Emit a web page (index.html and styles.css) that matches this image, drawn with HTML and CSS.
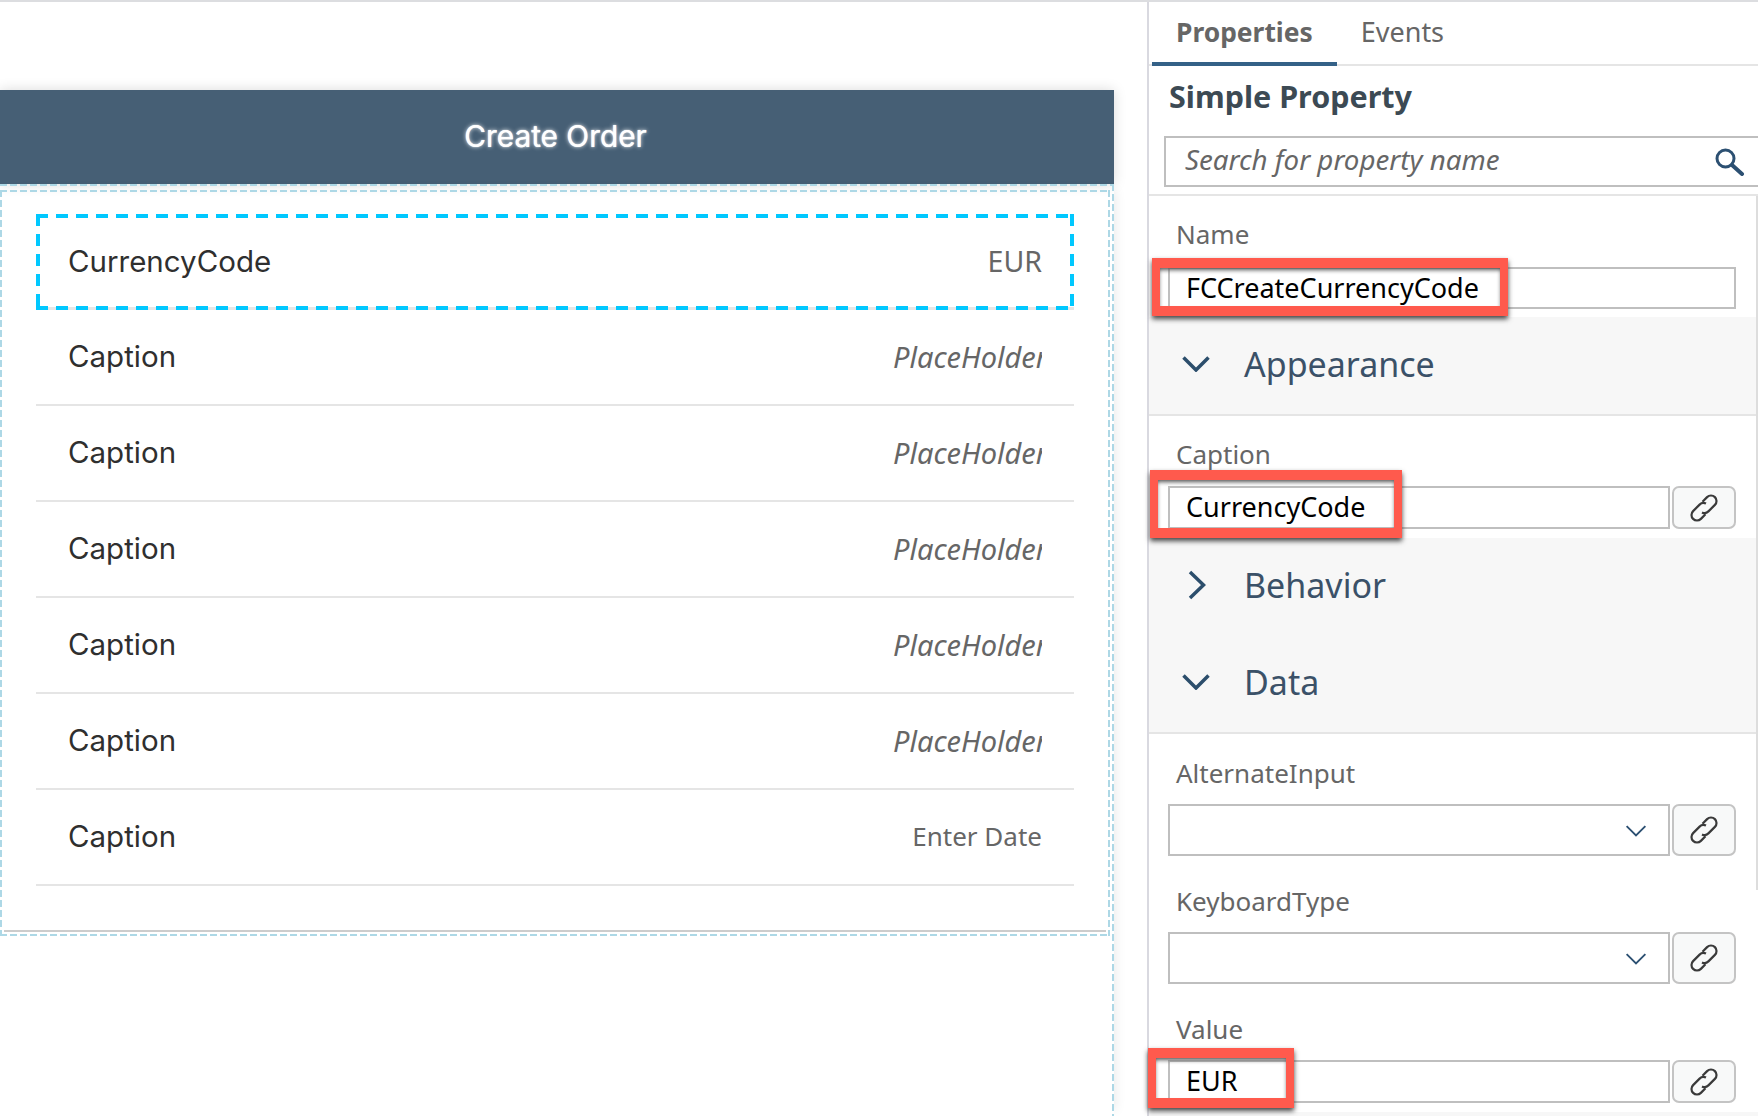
FILE: index.html
```html
<!DOCTYPE html>
<html lang="en">
  <head>
    <meta charset="UTF-8" />
    <title>Create Order</title>
    <link rel="stylesheet" href="styles.css">
  </head>
  <body>
    <svg class="defs" width="0" height="0">
      <symbol id="link" viewBox="0 0 28 28">
        <path d="M12.5 7.7 L17.1 3.1 A5.5 5.5 0 0 1 24.9 10.9 L18.4 17.4 A5.5 5.5 0 0 1 12 18.4" />
        <path d="M15.5 20.3 L10.9 24.9 A5.5 5.5 0 0 1 3.1 17.1 L9.6 10.6 A5.5 5.5 0 0 1 16 9.6" />
      </symbol>
      <symbol id="down" viewBox="0 0 28 16">
        <path d="M1.5 1.5 L14 14 L26.5 1.5" />
      </symbol>
    </svg>
    <div id="container">
      <div class="canvas">
        <div class="order-title">Create Order</div>
        <div class="outer-drop">
          <div class="inner-drop">
            <div class="form">
              <div class="row selected"><span class="cap">CurrencyCode</span><span class="val">EUR</span></div>
              <div class="row"><span class="cap">Caption</span><span class="val hint">PlaceHolder</span></div>
              <div class="row"><span class="cap">Caption</span><span class="val hint">PlaceHolder</span></div>
              <div class="row"><span class="cap">Caption</span><span class="val hint">PlaceHolder</span></div>
              <div class="row"><span class="cap">Caption</span><span class="val hint">PlaceHolder</span></div>
              <div class="row"><span class="cap">Caption</span><span class="val hint">PlaceHolder</span></div>
              <div class="row"><span class="cap">Caption</span><span class="val date">Enter Date</span></div>
            </div>
          </div>
        </div>
      </div>

      <div class="panel">
        <div class="tabs">
          <div class="tab active">Properties</div>
          <div class="tab">Events</div>
        </div>
        <div class="panel-title">Simple Property</div>
        <div class="search">
          <span>Search for property name</span>
          <svg class="search-icon" viewBox="0 0 30 28">
            <circle cx="10.5" cy="10.5" r="8.5" />
            <path class="handle" d="M17 17 L27 26" />
          </svg>
        </div>
        <div class="props">
          <div class="scroll-thumb"></div>
          <div class="group name-group">
            <div class="label">Name</div>
            <div class="field-row short">
              <div class="input">FCCreateCurrencyCode</div>
              <span class="mark mark-name"></span>
            </div>
          </div>
          <div class="section line">
            <svg class="chev"><use href="#down" /></svg>
            <span>Appearance</span>
          </div>
          <div class="group caption-group">
            <div class="label">Caption</div>
            <div class="field-row">
              <div class="input">CurrencyCode</div>
              <button class="link-btn"><svg><use href="#link" /></svg></button>
              <span class="mark mark-caption"></span>
            </div>
          </div>
          <div class="section">
            <svg class="chev right" viewBox="0 0 18 30"><path d="M2 2 L15.5 15 L2 28" /></svg>
            <span>Behavior</span>
          </div>
          <div class="section line">
            <svg class="chev"><use href="#down" /></svg>
            <span>Data</span>
          </div>
          <div class="group data-group">
            <div class="label">AlternateInput</div>
            <div class="field-row tall">
              <div class="input select"><svg class="arrow"><use href="#down" /></svg></div>
              <button class="link-btn"><svg><use href="#link" /></svg></button>
            </div>
            <div class="label next">KeyboardType</div>
            <div class="field-row tall">
              <div class="input select"><svg class="arrow"><use href="#down" /></svg></div>
              <button class="link-btn"><svg><use href="#link" /></svg></button>
            </div>
            <div class="label next">Value</div>
            <div class="field-row">
              <div class="input">EUR</div>
              <button class="link-btn"><svg><use href="#link" /></svg></button>
              <span class="mark mark-value"></span>
            </div>
          </div>
          <div class="section tail"></div>
        </div>
      </div>
    </div>
  </body>
</html>
```

FILE: styles.css
```css
html,
body {
  margin: 0;
  height: 1116px;
  overflow: hidden;
  background-color: white;
}
.defs {
  position: absolute;
}
#container {
  height: 1114px;
  display: flex;
  overflow: hidden;
  border-top: 2px solid #dcdde0;
  font-family: "Noto Sans", sans-serif;
}

/* left side */
.canvas {
  width: 1147px;
  flex: none;
  padding-top: 88px;
  box-sizing: border-box;
}
.order-title {
  width: 1114px;
  height: 94px;
  padding: 0 3px 2px 0;
  box-sizing: border-box;
  display: flex;
  align-items: center;
  justify-content: center;
  background-color: #465f75;
  box-shadow: 0 0 12px rgba(0, 0, 0, 0.15);
  color: white;
  font-family: Inter, sans-serif;
  font-size: 29.8px;
  text-shadow: 0 0 4px rgba(255, 255, 255, 0.9), 0 0 1px white;
}
.outer-drop {
  width: 1114px;
  height: 932px;
  box-sizing: border-box;
  padding-top: 6px;
  background:
    linear-gradient(90deg, #add8e6 7px, transparent 7px) top left / 10px 2px repeat-x,
    linear-gradient(#add8e6 7px, transparent 7px) top right / 2px 10px repeat-y;
  box-shadow: 8px 0 10px -6px rgba(0, 0, 0, 0.08);
}
.inner-drop {
  width: 1110px;
  height: 746px;
  box-sizing: border-box;
  padding: 2px;
  background:
    linear-gradient(90deg, #add8e6 7px, transparent 7px) top left / 10px 2px repeat-x,
    linear-gradient(90deg, #add8e6 7px, transparent 7px) bottom left / 10px 2px repeat-x,
    linear-gradient(#add8e6 7px, transparent 7px) top left / 2px 10px repeat-y,
    linear-gradient(#add8e6 7px, transparent 7px) top right / 2px 10px repeat-y;
}
.form {
  height: 716px;
  margin: 0 2px;
  padding: 22px 0 0 32px;
  border-bottom: 2px solid #ccc;
}
.row {
  width: 1038px;
  height: 96px;
  box-sizing: border-box;
  display: flex;
  align-items: center;
  justify-content: space-between;
  padding: 0 32px 2px 32px;
  border-bottom: 2px solid #e5e5e5;
}
.row.selected {
  border-bottom: none;
  background:
    linear-gradient(90deg, #00c8ff 12px, transparent 12px) top left / 20px 4px repeat-x,
    linear-gradient(90deg, #00c8ff 12px, transparent 12px) bottom left / 20px 4px repeat-x,
    linear-gradient(#00c8ff 12px, transparent 12px) top left / 4px 20px repeat-y,
    linear-gradient(#00c8ff 12px, transparent 12px) top right / 4px 20px repeat-y,
    linear-gradient(#e5e5e5, #e5e5e5) bottom left / 100% 3px no-repeat;
}
.cap {
  color: #2f2f2f;
  font-family: Inter, sans-serif;
  font-size: 29.5px;
}
.val {
  color: #666;
  font-size: 28.5px;
}
.val.date {
  font-size: 26px;
}
.val.hint {
  width: 149px;
  overflow: hidden;
  white-space: nowrap;
  font-size: 29px;
  font-style: italic;
}

/* right side */
.panel {
  flex: 1;
  min-width: 0;
  border-left: 2px solid #d9d9e0;
}
.tabs {
  height: 62px;
  display: flex;
  border-bottom: 2px solid #e5e5e5;
  padding-left: 3px;
}
.tab {
  height: 64px;
  box-sizing: border-box;
  padding: 11px 24px 0;
  color: #666;
  font-size: 27px;
}
.tab.active {
  padding-top: 12px;
  border-bottom: 4px solid #346187;
  font-size: 26.4px;
  font-weight: bold;
}
.panel-title {
  height: 70px;
  line-height: 60px;
  padding-left: 20px;
  color: #3c4a54;
  font-size: 30.5px;
  font-weight: bold;
}
.search {
  height: 51px;
  margin-left: 15px;
  box-sizing: border-box;
  display: flex;
  align-items: center;
  justify-content: space-between;
  padding: 0 13px 6px 19px;
  border: 2px solid #bfbfbf;
  border-right: none;
  color: #666;
  font-size: 27.7px;
  font-style: italic;
}
.search-icon {
  width: 30px;
  height: 28px;
  margin-bottom: -6px;
  fill: none;
  stroke: #2c5072;
  stroke-width: 3;
}
.search-icon .handle {
  stroke-width: 4;
  stroke-linecap: round;
}
.props {
  position: relative;
  margin-top: 7px;
  border-top: 2px solid #e5e5e5;
}
.scroll-thumb {
  position: absolute;
  top: 0;
  right: 0;
  width: 2px;
  height: 694px;
  background-color: #ddd;
}
.group {
  padding: 25px 22px 9px 19px;
}
.name-group {
  padding-bottom: 8px;
}
.data-group {
  padding-top: 26px;
}
.label {
  height: 30px;
  line-height: 27px;
  margin-bottom: 14px;
  padding-left: 8px;
  color: #666;
  font-size: 26px;
}
.name-group .label {
  margin-bottom: 16px;
}
.caption-group .label {
  margin-bottom: 15px;
}
.label.next {
  margin-top: 32px;
}
.field-row {
  position: relative;
  height: 43px;
  display: flex;
  gap: 2px;
}
.field-row.short {
  height: 42px;
}
.field-row.tall {
  height: 52px;
}
.input {
  flex: 1;
  min-width: 0;
  box-sizing: border-box;
  display: flex;
  align-items: center;
  padding: 0 0 2px 16px;
  border: 2px solid #bfbfbf;
  background-color: white;
  color: black;
  font-size: 27px;
}
.input.select {
  justify-content: flex-end;
  padding-right: 21px;
}
.arrow {
  width: 22px;
  height: 12px;
  margin-top: 4px;
  fill: none;
  stroke: #2c5072;
  stroke-width: 2.5;
}
.link-btn {
  width: 64px;
  flex: none;
  padding: 0;
  display: flex;
  align-items: center;
  justify-content: center;
  border: 2px solid #c4c4c4;
  border-radius: 7px;
  background-color: #f8f9f9;
}
.link-btn svg {
  width: 28px;
  height: 28px;
  fill: none;
  stroke: #3a3a3a;
  stroke-width: 2.2;
}
.section {
  height: 97px;
  box-sizing: border-box;
  display: flex;
  align-items: center;
  padding: 0 0 4px 33px;
  background-color: #f7f7f7;
  color: #3b5168;
  font-size: 34px;
}
.section.line {
  height: 99px;
  border-bottom: 2px solid #e5e5e5;
}
.section.tail {
  height: 4px;
  padding: 0;
}
.section span {
  margin-left: 34px;
}
.chev {
  width: 28px;
  height: 16px;
  flex: none;
  fill: none;
  stroke: #2c4e6c;
  stroke-width: 3.5;
}
.chev.right {
  width: 18px;
  height: 30px;
  margin-left: 6px;
  margin-right: 4px;
}

/* red boxes drawn over the form in the screenshot */
.mark {
  position: absolute;
  box-sizing: border-box;
  border: solid #ff5a4d;
  border-width: 10px 8px;
  box-shadow: 0 3px 5px #444, inset 0 3px 4px -1px #555;
}
.mark-name {
  top: -9px;
  left: -16px;
  width: 356px;
  height: 58px;
}
.mark-caption {
  top: -16px;
  left: -18px;
  width: 252px;
  height: 68px;
}
.mark-value {
  top: -12px;
  left: -20px;
  width: 146px;
  height: 60px;
}
```
